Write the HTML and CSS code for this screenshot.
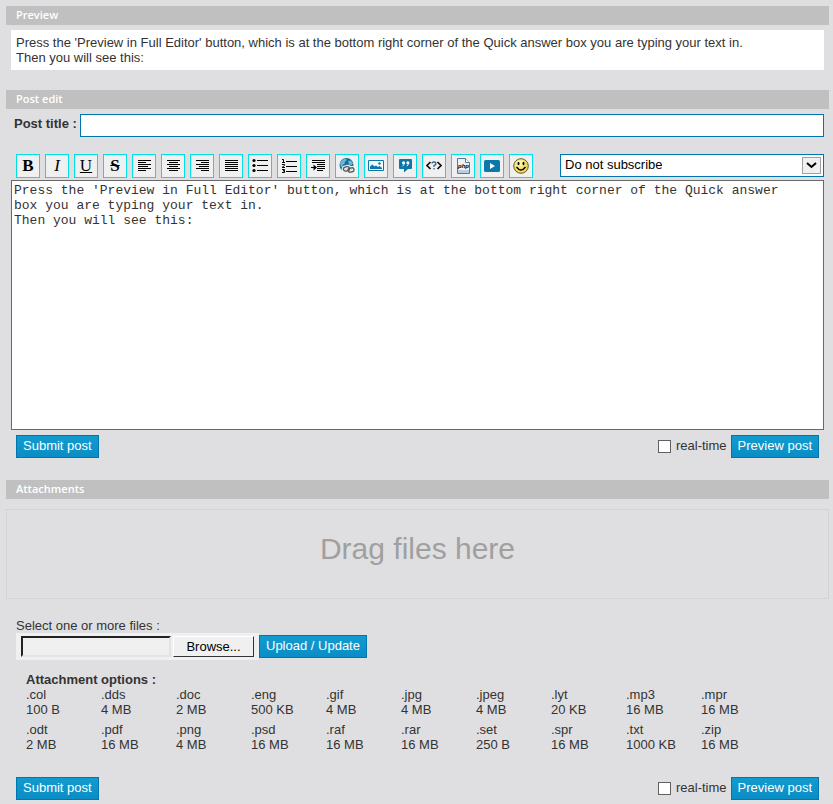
FILE: index.html
```html
<!DOCTYPE html>
<html lang="en">
<head>
<meta charset="utf-8">
<title>Post edit</title>
<link rel="stylesheet" href="styles.css">
</head>
<body>
<section class="preview">
  <h2 class="bar">Preview</h2>
  <p class="preview-text">Press the 'Preview in Full Editor' button, which is at the bottom right corner of the Quick answer box you are typing your text in.<br>Then you will see this:</p>
</section>

<form class="editor">
  <h2 class="bar">Post edit</h2>
  <div class="title-row">
    <label for="title">Post title :</label>
    <input class="title-input" id="title" type="text">
  </div>
  <div class="tools-row">
    <div class="tools">
      <button type="button" class="tool bold" aria-label="Bold">B</button>
      <button type="button" class="tool italic" aria-label="Italic">I</button>
      <button type="button" class="tool underline" aria-label="Underline">U</button>
      <button type="button" class="tool strike" aria-label="Strikethrough">S</button>
      <button type="button" class="tool" aria-label="Align left"><svg viewBox="0 0 16 16"><path d="M2 2.5h13M2 4.5h8M2 6.5h13M2 8.5h10M2 10.5h13M2 12.5h8" stroke="#000"/></svg></button>
      <button type="button" class="tool" aria-label="Align center"><svg viewBox="0 0 16 16"><path d="M2 2.5h13M4 4.5h9M2 6.5h13M4 8.5h9M2 10.5h13M4 12.5h9" stroke="#000"/></svg></button>
      <button type="button" class="tool" aria-label="Align right"><svg viewBox="0 0 16 16"><path d="M2 2.5h13M7 4.5h8M2 6.5h13M5 8.5h10M2 10.5h13M7 12.5h8" stroke="#000"/></svg></button>
      <button type="button" class="tool" aria-label="Justify"><svg viewBox="0 0 16 16"><path d="M2 2.5h13M2 4.5h13M2 6.5h13M2 8.5h13M2 10.5h13M2 12.5h13" stroke="#000"/></svg></button>
      <button type="button" class="tool" aria-label="Bulleted list"><svg viewBox="0 0 16 16"><path d="M5 2.5h11M5 7.5h11M5 12.5h11" stroke="#000"/><circle cx="2" cy="2.5" r="1.6"/><circle cx="2" cy="7.5" r="1.6"/><circle cx="2" cy="12.5" r="1.6"/></svg></button>
      <button type="button" class="tool" aria-label="Numbered list"><svg viewBox="0 0 16 16"><path d="M5 3.5h11M5 8.5h11M5 13.5h11" stroke="#000"/><path d="M1 1.5h1.5v3M1 4.5h3M1 6.5h2.5v1L1 9.5h3M1 11.5h2.5v1.2H2h1.5v1.8H1" fill="none" stroke="#000"/></svg></button>
      <button type="button" class="tool" aria-label="Indent"><svg viewBox="0 0 16 16"><path d="M2 2.5h13M2 4.5h13M7 6.5h8M7 8.5h8M7 10.5h8M7 12.5h6M1 9.5h4" stroke="#000"/><path d="M3.5 6.5 7 9.5l-3.500 3z"/></svg></button>
      <button type="button" class="tool" aria-label="Link"><svg viewBox="0 0 16 16"><circle cx="7.5" cy="7" r="7" fill="#0b70a0"/><path d="M1 5.5C2 3 4 1 6.500 .8L8 2 6 3.500 5.500 6 3.500 7v2L2 9zM9 3l3-.5 2 3-2 2-2-1z" fill="#73b4cc"/><g fill="none" stroke="#f0f0f0" stroke-width="3.600"><rect x="4.500" y="9" width="6" height="4" rx="2" transform="rotate(-12 7 11)"/><rect x="9" y="10" width="6" height="4" rx="2" transform="rotate(-12 12 12)"/></g><g fill="none" stroke="#555" stroke-width="1.300"><rect x="4.500" y="9" width="6" height="4" rx="2" transform="rotate(-12 7 11)"/><rect x="9" y="10" width="6" height="4" rx="2" transform="rotate(-12 12 12)"/></g></svg></button>
      <button type="button" class="tool" aria-label="Image"><svg viewBox="0 0 16 16"><path d="M.5 2.500h15v10H.5z" fill="#f4f9fb" stroke="#0b78aa"/><path d="M2 11V8.500l2.500-2 2 2 1.500-1L10 9l1.500-1L14 10v1z" fill="#0b78aa"/><circle cx="11.500" cy="5.500" r="1.200" fill="#0b78aa"/></svg></button>
      <button type="button" class="tool" aria-label="Quote"><svg viewBox="0 0 16 16"><path d="M3 1h11q1 0 1 1v8q0 1-1 1h-3l-4 3.500V11H3q-1 0-1-1V2q0-1 1-1z" fill="#0b78aa"/><g fill="#fff"><circle cx="6.500" cy="4.800" r="1.500"/><circle cx="10.800" cy="4.800" r="1.500"/></g><path d="M7.500 4.500Q7.500 7 5.500 8M11.800 4.500Q11.800 7 9.800 8" fill="none" stroke="#fff"/></svg></button>
      <button type="button" class="tool" aria-label="Code"><svg viewBox="0 0 16 16"><path d="M4.500 4 1 7.500 4.500 11M11.500 4 15 7.500 11.500 11" fill="none" stroke="#111" stroke-width="1.700"/><path d="M6 5.500Q6 4 8 4t2 1.800Q10 7 8 7.500V9M8 10v1.500" fill="none" stroke="#346b8d" stroke-width="1.300"/></svg></button>
      <button type="button" class="tool" aria-label="PHP"><svg viewBox="0 0 16 16"><path d="M2.500.5h8l4 4v11h-12z" fill="#e9f2f8" stroke="#537a94"/><path d="M10.500.5v4h4" fill="#fff" stroke="#537a94"/><path d="M3 12h11v3H3z" fill="#b6d0e2"/><text x="3" y="10" class="php">php</text></svg></button>
      <button type="button" class="tool" aria-label="Video"><svg viewBox="0 0 16 16"><rect y="2" width="16" height="12" rx="1.500" fill="#0b78aa"/><path d="M6 5v6l5-3z" fill="#fff"/></svg></button>
      <button type="button" class="tool" aria-label="Smiley"><svg viewBox="0 0 16 16"><defs><radialGradient id="face" cx=".4" cy=".3"><stop offset="0" stop-color="#fffbc0"/><stop offset="1" stop-color="#f0d860"/></radialGradient></defs><circle cx="8" cy="8" r="7.300" fill="url(#face)" stroke="#6b5a20"/><ellipse cx="5.500" cy="5.500" rx="1" ry="1.800"/><ellipse cx="10.500" cy="5.500" rx="1" ry="1.800"/><path d="M3.500 9Q8 15 12.500 9" fill="none" stroke="#000" stroke-width="1.300"/></svg></button>
    </div>
    <div class="subscribe">
      <select aria-label="Subscription"><option>Do not subscribe</option></select>
      <span class="arrow"><svg viewBox="0 0 17 15"><path d="m4 5 4.500 4L13 5" fill="none" stroke="#000" stroke-width="2"/></svg></span>
    </div>
  </div>
  <textarea class="message" aria-label="Message">Press the 'Preview in Full Editor' button, which is at the bottom right corner of the Quick answer box you are typing your text in.
Then you will see this:</textarea>
  <div class="actions">
    <button type="submit" class="btn">Submit post</button>
    <div class="preview-actions">
      <label class="check"><input type="checkbox">real-time</label>
      <button type="button" class="btn">Preview post</button>
    </div>
  </div>
</form>

<form class="attachments">
  <h2 class="bar">Attachments</h2>
  <div class="drop">Drag files here</div>
  <label class="file-label" for="file">Select one or more files :</label>
  <div class="file-row">
    <div class="picker">
      <input class="file-name" id="file" type="text" readonly>
      <button type="button" class="browse">Browse...</button>
    </div>
    <button type="submit" class="btn">Upload / Update</button>
  </div>
  <h3 class="options-title">Attachment options :</h3>
  <ul class="types">
    <li>.col<br>100 B</li>
    <li>.dds<br>4 MB</li>
    <li>.doc<br>2 MB</li>
    <li>.eng<br>500 KB</li>
    <li>.gif<br>4 MB</li>
    <li>.jpg<br>4 MB</li>
    <li>.jpeg<br>4 MB</li>
    <li>.lyt<br>20 KB</li>
    <li>.mp3<br>16 MB</li>
    <li>.mpr<br>16 MB</li>
    <li>.odt<br>2 MB</li>
    <li>.pdf<br>16 MB</li>
    <li>.png<br>4 MB</li>
    <li>.psd<br>16 MB</li>
    <li>.raf<br>16 MB</li>
    <li>.rar<br>16 MB</li>
    <li>.set<br>250 B</li>
    <li>.spr<br>16 MB</li>
    <li>.txt<br>1000 KB</li>
    <li>.zip<br>16 MB</li>
  </ul>
  <div class="actions">
    <button type="submit" class="btn">Submit post</button>
    <div class="preview-actions">
      <label class="check"><input type="checkbox">real-time</label>
      <button type="button" class="btn">Preview post</button>
    </div>
  </div>
</form>
</body>
</html>
```
FILE: styles.css
```css
* {
  box-sizing: border-box;
}

body {
  margin: 0;
  padding: 6px 4px 4px 6px;
  background: #dfdfe1;
  color: #333;
  font: 13px/15px "Liberation Sans", Arial, sans-serif;
}

button,
input,
select {
  margin: 0;
  font: inherit;
}

.bar {
  margin: 0;
  padding: 0 10px 2px;
  background: #c0c0c0;
  color: #fff;
  font: 600 11px/17px "Open Sans", sans-serif;
}

.preview {
  margin-bottom: 20px;
}

.preview-text {
  margin: 5px 5px 0;
  padding: 5px;
  background: #fff;
}

.title-row {
  display: flex;
  gap: 3px;
  margin: 5px 5px 0 8px;
  font-weight: bold;
}

.title-row label {
  padding-top: 2px;
}

.title-input {
  flex: 1;
  min-width: 0;
  height: 23px;
  border: 1px solid #0076b1;
  background: #fff;
}

.tools-row {
  display: flex;
  justify-content: space-between;
  gap: 16px;
  margin: 17px 5px 2px 10px;
}

.tools {
  display: flex;
  flex-wrap: wrap;
  gap: 5px;
}

.tool {
  display: flex;
  align-items: center;
  justify-content: center;
  width: 24px;
  height: 24px;
  padding: 0;
  border: 1px solid #00e1e6;
  background: #f0f0f0;
  color: #000;
  font: 17px/20px "Liberation Serif", serif;
}

.tool svg {
  width: 16px;
  height: 16px;
}

.bold {
  font-weight: bold;
}

.italic {
  font-style: italic;
}

.underline {
  text-decoration: underline;
}

.strike {
  font-weight: bold;
  text-decoration: line-through;
}

.php {
  font: italic bold 6px "Liberation Sans", sans-serif;
}

.subscribe {
  position: relative;
  flex: 0 0 264px;
}

.subscribe select {
  width: 100%;
  height: 23px;
  padding: 0 24px 2px 4px;
  border: 1px solid #0076b1;
  border-radius: 0;
  background: #fff;
  color: #000;
  appearance: none;
}

.arrow {
  position: absolute;
  top: 3px;
  right: 3px;
  width: 19px;
  height: 17px;
  border: 1px solid #a0a0a0;
  background: #f0f0f0;
  pointer-events: none;
}

.arrow svg {
  display: block;
}

.message {
  display: block;
  width: calc(100% - 10px);
  height: 250px;
  margin: 0 5px;
  padding: 2px 20px 2px 2px;
  border: 1px solid #696969;
  border-radius: 0;
  background: #fff;
  color: #333;
  font: 13px/15px "Liberation Mono", monospace;
  resize: none;
}

.actions,
.preview-actions,
.check {
  display: flex;
}

.actions {
  justify-content: space-between;
  margin: 5px 10px 0;
}

.btn {
  height: 23px;
  padding: 0 6px 2px;
  border: 1px solid #0076b1;
  background: linear-gradient(#129bcf, #0a8dc5);
  color: #fff;
}

.preview-actions {
  gap: 4px;
}

.check {
  gap: 5px;
  padding-top: 3px;
}

.check input {
  width: 13px;
  height: 13px;
  margin-top: 2px;
  border: 1px solid #606060;
  background: #fff;
  appearance: none;
}

.check input:checked {
  background: #0a8dc5;
}

.attachments {
  margin-top: 22px;
}

.drop {
  height: 90px;
  margin: 10px 0 19px;
  border: 1px dotted #c8c8ca;
  color: #a0a0a0;
  font-size: 30px;
  line-height: 78px;
  text-align: center;
}

.file-label {
  display: block;
  margin-left: 10px;
}

.file-row {
  display: flex;
  align-items: center;
  margin-left: 10px;
}

.picker {
  display: flex;
  gap: 2px;
  padding: 3px 5px;
  background: #f0f0f0;
}

.file-name {
  width: 150px;
  height: 21px;
  border: 2px solid;
  border-color: #222 #e3e3e3 #e3e3e3 #222;
  background: #f0f0f0;
}

.browse {
  width: 81px;
  height: 21px;
  padding: 0;
  border: 1px solid;
  border-color: #fff #333 #333 #fff;
  background: #f0f0f0;
  color: #000;
}

.options-title {
  margin: 12px 0 0 20px;
  font-size: 13px;
  line-height: 15px;
}

.types {
  display: grid;
  grid-template-columns: repeat(auto-fill, 75px);
  row-gap: 5px;
  max-width: 750px;
  margin: 0 20px 25px;
  padding: 0;
  list-style: none;
}
```
